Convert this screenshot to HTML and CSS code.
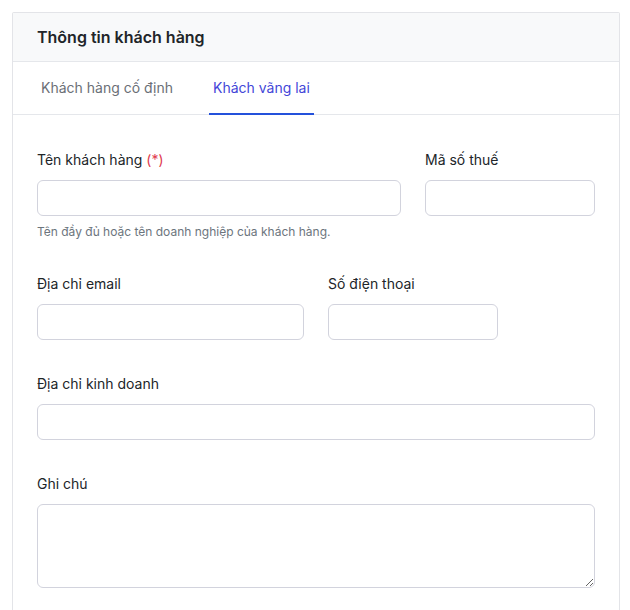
FILE: index.html
```html
<!DOCTYPE html>
<html lang="vi">
<head>
<meta charset="utf-8">
<title>Thông tin khách hàng</title>
<link rel="stylesheet" href="styles.css">
</head>
<body>
<div class="card">
  <div class="card-header">Thông tin khách hàng</div>
  <div class="tabs">
    <div class="tab">Khách hàng cố định</div>
    <div class="tab active">Khách vãng lai</div>
  </div>
  <form class="card-body">
    <div class="field span-8">
      <label class="label">Tên khách hàng <span class="req">(*)</span></label>
      <input class="input" type="text">
      <div class="help">Tên đầy đủ hoặc tên doanh nghiệp của khách hàng.</div>
    </div>
    <div class="field span-4">
      <label class="label">Mã số thuế</label>
      <input class="input" type="text">
    </div>
    <div class="field span-6">
      <label class="label">Địa chỉ email</label>
      <input class="input" type="text">
    </div>
    <div class="field span-4">
      <label class="label">Số điện thoại</label>
      <input class="input" type="text">
    </div>
    <div class="field span-12">
      <label class="label">Địa chỉ kinh doanh</label>
      <input class="input" type="text">
    </div>
    <div class="field span-12">
      <label class="label">Ghi chú</label>
      <textarea class="input textarea"></textarea>
    </div>
  </form>
</div>
</body>
</html>
```
FILE: styles.css
```css
* { box-sizing: border-box; }
html, body { background: #ffffff; }
body {
  margin: 12px 10px 0 12px;
  font-family: Inter, "Noto Sans", sans-serif;
  color: #212529;
}
.card {
  border: 1px solid #e3e4e8;
  border-radius: 2px;
  box-shadow: 0 -1px 1px rgba(0,0,0,0.04);
  background: #fff;
}
.card-header {
  background: #f8f9fa;
  border-bottom: 1px solid #e5e7eb;
  padding: 12px 24px;
  font-size: 16px;
  line-height: 24px;
  font-weight: 600;
  color: #212529;
}
.tabs {
  display: flex;
  gap: 32px;
  padding: 0 24px;
  border-bottom: 1px solid #e5e7eb;
}
.tab {
  padding: 16px 4px 15px;
  font-size: 14px;
  line-height: 20px;
  color: #6b6f76;
  border-bottom: 2px solid transparent;
  margin-bottom: -1px;
}
.tab.active {
  color: #4346d8;
  border-bottom-color: #2451db;
}
.card-body {
  display: grid;
  grid-template-columns: repeat(12, 1fr);
  column-gap: 24px;
  row-gap: 34px;
  padding: 35px 24px 40px;
  margin: 0;
}
.field { display: flex; flex-direction: column; min-width: 0; }
.span-4 { grid-column: span 4; }
.span-6 { grid-column: span 6; }
.span-8 { grid-column: span 8; }
.span-12 { grid-column: span 12; }
.span-6 + .span-4 { grid-column: 7 / span 4; }
.label {
  font-size: 14px;
  line-height: 20px;
  color: #212529;
  margin-bottom: 10px;
}
.req { color: #e03a4e; }
.input {
  display: block;
  width: 100%;
  height: 36px;
  border: 1px solid #d2d3dd;
  border-radius: 6px;
  background: #fff;
  font-family: inherit;
  font-size: 14px;
  padding: 6px 12px;
  margin: 0;
}
.textarea {
  height: 84px;
  resize: vertical;
}
.help {
  margin-top: 8px;
  font-size: 12px;
  line-height: 16px;
  color: #6c757d;
}
```
